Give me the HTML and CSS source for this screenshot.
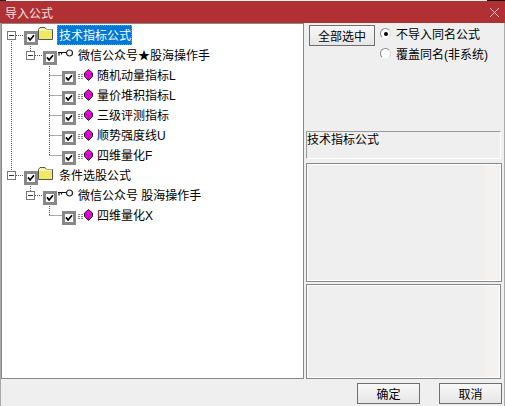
FILE: index.html
```html
<!DOCTYPE html>
<html lang="zh">
<head>
<meta charset="utf-8">
<title>导入公式</title>
<link rel="stylesheet" href="styles.css">
</head>
<body>
<svg class="defs" width="0" height="0" aria-hidden="true">
  <symbol id="check" viewBox="0 0 8 8"><path d="M1 3.4L3.1 6L7 1.2" stroke="#000" stroke-width="1.7" fill="none"/></symbol>
  <symbol id="folder" viewBox="0 0 15 13"><path d="M.5 2.5L2 .5H7L8.5 2.5H14.5V12.5H.5Z" fill="#f6f3a0" stroke="#555"/><rect x="1" y="3" width="13" height="9" fill="#efe964"/><path d="M1 3H14" stroke="#fffde0"/></symbol>
  <symbol id="key" viewBox="0 0 15 9"><path d="M0 3.5H9M1 3.5V6.5M3.5 3.5V5.5" stroke="#111" stroke-width="1.2" fill="none"/><circle cx="11.5" cy="4" r="3" fill="#fff" stroke="#222" stroke-width="1.2"/></symbol>
  <symbol id="gem" viewBox="0 0 19 12"><path d="M0 5.5H5M0 7.5H5M0 9.5H5" stroke="#888" stroke-dasharray="2 1"/><path d="M10.5 .5L14.5 4V7.5L10.5 11.5L6.5 7.5V4Z" fill="#ee00dc" stroke="#222"/><path d="M7 4.5L10.5 6.5L14 4.5M10.5 6.5V11" stroke="#a000a0" stroke-width=".6" fill="none"/></symbol>
</svg>
<div class="window">
  <div class="edge"></div>
  <header class="titlebar">
    <span class="title">导入公式</span>
    <svg class="close" width="9" height="9" viewBox="0 0 9 9"><path d="M0 0L9 9M9 0L0 9" stroke="#eccaca" stroke-width="1" fill="none"/></svg>
  </header>
  <main class="content">
    <div class="columns">
      <section class="tree">
        <svg class="guides" width="300" height="250" viewBox="0 0 300 250">
          <g stroke="#555" stroke-width="1" stroke-dasharray="1 1" fill="none">
            <path d="M9.5 17V151M14 11.5H22M14 151.5H22"/>
            <path d="M28.5 20V27M33 31.5H41M28.5 160V167M33 171.5H41"/>
            <path d="M47.5 40V132M47.5 51.5H60M47.5 71.5H60M47.5 91.5H60M47.5 111.5H60M47.5 131.5H60M47.5 180V191M47.5 191.5H60"/>
          </g>
        </svg>
        <div class="row lvl0">
          <span class="exp"></span><span class="cb"><svg><use href="#check"/></svg></span>
          <svg class="folder"><use href="#folder"/></svg>
          <span class="label selected">技术指标公式</span>
        </div>
        <div class="row lvl1">
          <span class="exp"></span><span class="cb"><svg><use href="#check"/></svg></span>
          <svg class="key"><use href="#key"/></svg>
          <span class="label">微信公众号★股海操作手</span>
        </div>
        <div class="row lvl2">
          <span class="cb"><svg><use href="#check"/></svg></span>
          <svg class="gem"><use href="#gem"/></svg>
          <span class="label">随机动量指标L</span>
        </div>
        <div class="row lvl2">
          <span class="cb"><svg><use href="#check"/></svg></span>
          <svg class="gem"><use href="#gem"/></svg>
          <span class="label">量价堆积指标L</span>
        </div>
        <div class="row lvl2">
          <span class="cb"><svg><use href="#check"/></svg></span>
          <svg class="gem"><use href="#gem"/></svg>
          <span class="label">三级评测指标</span>
        </div>
        <div class="row lvl2">
          <span class="cb"><svg><use href="#check"/></svg></span>
          <svg class="gem"><use href="#gem"/></svg>
          <span class="label">顺势强度线U</span>
        </div>
        <div class="row lvl2">
          <span class="cb"><svg><use href="#check"/></svg></span>
          <svg class="gem"><use href="#gem"/></svg>
          <span class="label">四维量化F</span>
        </div>
        <div class="row lvl0">
          <span class="exp"></span><span class="cb"><svg><use href="#check"/></svg></span>
          <svg class="folder"><use href="#folder"/></svg>
          <span class="label plain-root">条件选股公式</span>
        </div>
        <div class="row lvl1">
          <span class="exp"></span><span class="cb"><svg><use href="#check"/></svg></span>
          <svg class="key"><use href="#key"/></svg>
          <span class="label">微信公众号 股海操作手</span>
        </div>
        <div class="row lvl2">
          <span class="cb"><svg><use href="#check"/></svg></span>
          <svg class="gem"><use href="#gem"/></svg>
          <span class="label">四维量化X</span>
        </div>
      </section>
      <aside class="side">
        <div class="options">
          <button class="btn select-all" type="button">全部选中</button>
          <div class="radios">
            <div class="radio-row"><span class="radio on"></span><span>不导入同名公式</span></div>
            <div class="radio-row"><span class="radio"></span><span>覆盖同名(非系统)</span></div>
          </div>
        </div>
        <div class="group-title">技术指标公式</div>
        <div class="panel upper"></div>
        <div class="panel lower"></div>
      </aside>
    </div>
    <footer class="footer">
      <button class="btn action" type="button">确定</button>
      <button class="btn action" type="button">取消</button>
    </footer>
  </main>
</div>
</body>
</html>
```

FILE: styles.css
```css
* { box-sizing: border-box; }
html, body { margin: 0; padding: 0; }
body {
  width: 505px;
  height: 406px;
  overflow: hidden;
  font-family: "Liberation Sans", "Noto Sans CJK SC", sans-serif;
  font-size: 12px;
  color: #000;
}
.defs { position: absolute; }
.window {
  width: 505px;
  height: 406px;
  display: flex;
  flex-direction: column;
  background: #efefef;
}
.edge {
  height: 1px;
  flex: none;
  background: linear-gradient(90deg, #222 0 6px, #f4f4f4 6px 487px, #111 487px);
}
.titlebar {
  height: 22px;
  flex: none;
  background: #b13033;
  display: flex;
  align-items: center;
  justify-content: space-between;
  padding: 0 6px 0 5px;
  color: #f6e2e2;
  font-size: 12px;
}
.content {
  flex: 1;
  display: flex;
  flex-direction: column;
  min-height: 0;
  border-left: 1px solid #aaa;
  border-right: 1px solid #aaa;
}
.columns {
  display: flex;
  height: 356px;
  flex: none;
}
.tree {
  position: relative;
  width: 303px;
  flex: none;
  background: #fff;
  border: 1px solid #888;
  padding-top: 1px;
}
.guides { position: absolute; left: 0; top: 0; }
.row {
  position: relative;
  height: 20px;
  display: flex;
  align-items: center;
}
.lvl0 { padding-left: 5px; }
.lvl1 { padding-left: 24px; }
.lvl2 { padding-left: 60px; }
.exp {
  position: relative;
  width: 9px;
  height: 9px;
  border: 1px solid #777;
  background: #fff;
  margin: 1px 8px 0 0;
  flex: none;
}
.exp::after {
  content: "";
  position: absolute;
  left: 1px;
  right: 1px;
  top: 3px;
  height: 1px;
  background: #333;
}
.cb {
  width: 14px;
  height: 14px;
  border: 3px solid #888;
  background: #fff;
  display: flex;
  flex: none;
  margin-top: 6px;
}
.cb svg { display: block; width: 8px; height: 8px; }
.folder { width: 15px; height: 13px; margin: -3px 0 0 0; flex: none; }
.key { width: 15px; height: 9px; margin: -4px 0 0 1px; flex: none; }
.gem { width: 19px; height: 12px; margin-left: 2px; flex: none; }
.label { white-space: nowrap; height: 20px; line-height: 22px; }
.lvl1 .label { margin-left: 5px; }
.plain-root { margin-left: 6px; }
.selected {
  background: #0078d7;
  color: #fff;
  outline: 1px dotted #e08a00;
  outline-offset: -1px;
  margin-left: 4px;
  padding: 0 1px 0 2px;
}
.side {
  flex: 1;
  min-width: 0;
  padding: 2px 2px 0 2px;
  display: flex;
  flex-direction: column;
}
.options {
  display: flex;
  height: 106px;
  flex: none;
  padding-left: 3px;
}
.btn {
  font: inherit;
  color: #000;
  background: linear-gradient(#f8f8f8, #e6e6e6);
  border: 1px solid #6f6f6f;
  padding: 0;
}
.select-all {
  width: 66px;
  height: 21px;
  flex: none;
}
.radios {
  margin-left: 5px;
  display: flex;
  flex-direction: column;
  gap: 3px;
}
.radio-row {
  display: flex;
  align-items: center;
  height: 17px;
  gap: 5px;
}
.radio {
  width: 11px;
  height: 11px;
  border-radius: 50%;
  border: 1px solid;
  border-color: #8a8a8a #d8d8d8 #f4f4f4 #8a8a8a;
  background: #fff;
  position: relative;
  flex: none;
}
.radio.on::after {
  content: "";
  position: absolute;
  left: 2.5px;
  top: 2.5px;
  width: 4px;
  height: 4px;
  border-radius: 50%;
  background: #000;
}
.group-title {
  height: 28px;
  flex: none;
  border: 1px solid #fff;
  border-top: 1px solid #999;
  border-left: 1px solid #999;
  line-height: 16px;
  margin-right: 1px;
}
.panel {
  border: 1px solid #888;
  box-shadow: inset 1px 1px 0 #fff, inset -1px -1px 0 #fff;
  background: linear-gradient(90deg, #efefef 0 92%, #f3f2f0 92%);
  flex: none;
}
.upper { height: 119px; margin-top: 4px; }
.lower { height: 95px; margin-top: 2px; margin-right: 1px; }
.footer {
  flex: 1;
  display: flex;
  justify-content: flex-end;
  align-items: flex-start;
  gap: 19px;
  padding: 4px 2px 0 0;
}
.action { width: 63px; height: 21px; }
```
